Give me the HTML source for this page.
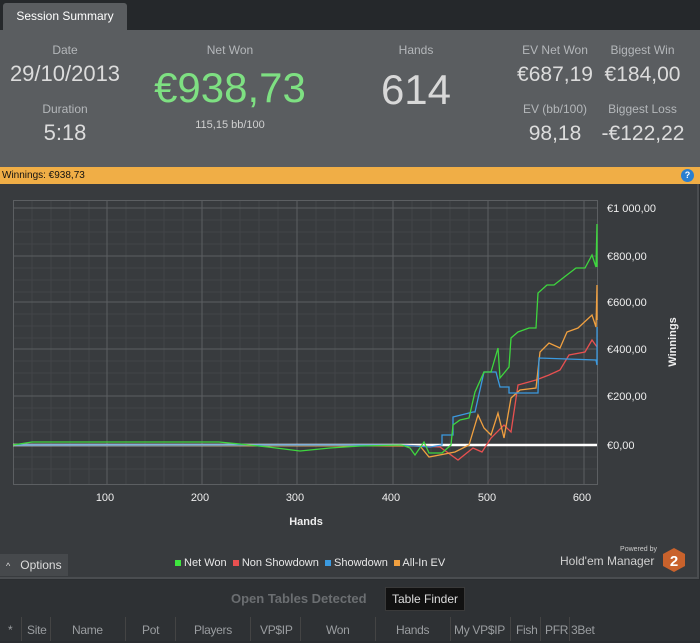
<!DOCTYPE html>
<html><head><meta charset="utf-8"><style>
body{margin:0;width:700px;height:641px;overflow:hidden;background:#2b2e31;font-family:"Liberation Sans",sans-serif;position:relative}
.a{position:absolute}
.lbl{color:#b4b7ba;font-size:12px;text-align:center}
.val{color:#dcdcdc;text-align:center}
</style></head><body>
<div class="a" style="left:0;top:0;width:700px;height:30px;background:#25282b"></div>
<div class="a" style="left:3px;top:3px;width:124px;height:28px;background:#5a5d60;border-radius:3px 3px 0 0;color:#fff;font-size:12px;line-height:26px;text-align:center">Session Summary</div>
<div class="a" style="left:0;top:30px;width:700px;height:137px;background:#5a5d60"></div>
<div class="a lbl" style="left:15px;top:43px;width:100px">Date</div>
<div class="a val" style="left:0;top:61px;width:130px;font-size:22px">29/10/2013</div>
<div class="a lbl" style="left:15px;top:102px;width:100px">Duration</div>
<div class="a val" style="left:15px;top:120px;width:100px;font-size:22px">5:18</div>
<div class="a lbl" style="left:180px;top:43px;width:100px">Net Won</div>
<div class="a" style="left:130px;top:64px;width:200px;text-align:center;color:#7ee082;font-size:42px">€938,73</div>
<div class="a lbl" style="left:170px;top:119px;width:120px;font-size:11px;color:#d0d0d0">115,15 bb/100</div>
<div class="a lbl" style="left:366px;top:43px;width:100px">Hands</div>
<div class="a val" style="left:346px;top:66px;width:140px;font-size:42px;color:#d8d8d8">614</div>
<div class="a lbl" style="left:505px;top:43px;width:100px">EV Net Won</div>
<div class="a val" style="left:505px;top:63px;width:100px;font-size:21px">€687,19</div>
<div class="a lbl" style="left:590px;top:43px;width:105px">Biggest Win</div>
<div class="a val" style="left:590px;top:63px;width:105px;font-size:21px">€184,00</div>
<div class="a lbl" style="left:505px;top:102px;width:100px">EV (bb/100)</div>
<div class="a val" style="left:505px;top:122px;width:100px;font-size:21px">98,18</div>
<div class="a lbl" style="left:590px;top:102px;width:105px">Biggest Loss</div>
<div class="a val" style="left:588px;top:122px;width:110px;font-size:21px">-€122,22</div>
<div class="a" style="left:0;top:167px;width:700px;height:17px;background:#f0ae46;font-size:10px;line-height:17px;color:#111;padding-left:2px">Winnings: €938,73</div>
<div class="a" style="left:681px;top:169px;width:13px;height:13px;border-radius:50%;background:#2b7fd0;color:#fff;font-size:9px;line-height:13px;text-align:center;font-weight:bold">?</div>
<div class="a" style="left:0;top:184px;width:697px;height:393px;background:#383b3e;border-right:2px solid #4a4d50;border-bottom:2px solid #4a4d50"></div>
<svg class="a" style="left:0;top:184px" width="700" height="370" viewBox="0 184 700 370">
<g stroke="#424548" stroke-width="1">
<path d="M13 220H597M13 232H597M13 244H597M13 268H597M13 280H597M13 292H597M13 314H597M13 326H597M13 338H597M13 361H597M13 373H597M13 384H597M13 408H597M13 420H597M13 432H597M13 457H597M13 469H597M32 200V484M51 200V484M70 200V484M89 200V484M126 200V484M145 200V484M164 200V484M183 200V484M221 200V484M240 200V484M259 200V484M278 200V484M316 200V484M335 200V484M354 200V484M373 200V484M412 200V484M431 200V484M450 200V484M469 200V484M507 200V484M526 200V484M545 200V484M564 200V484"/>
</g>
<g stroke="#5c5f62" stroke-width="1">
<path d="M13 208H597M13 256H597M13 302H597M13 349H597M13 396H597M107 200V484M202 200V484M297 200V484M393 200V484M488 200V484M584 200V484"/>
<rect x="13.5" y="200.5" width="584" height="284" fill="none"/>
</g>
<line x1="13" y1="445" x2="597" y2="445" stroke="#fff" stroke-width="2.5"/>
<g fill="none" stroke-width="1.3">
<polyline stroke="#e85050" points="13,445 400,445 440,447 458,460 473,448 482,452 491,438 504,425 511,432 518,385 536,380 549,375 560,370 569,355 585,352 592,340 597,347"/>
<polyline stroke="#f0a040" points="13,445 420,446 429,457 455,452 469,445 478,415 484,428 491,435 498,413 504,438 511,398 520,390 536,388 540,352 549,343 560,348 567,332 578,328 592,315 596,327 597,285 597,320"/>
<polyline stroke="#3b9ae0" points="13,445 400,445 430,447 442,445 442,435 453,435 453,417 473,412 475,412 484,372 496,372 500,387 509,387 509,393 538,393 539,358 596,360 597,365 597,327"/>
<polyline stroke="#3ed63e" points="13,445 32,442 219,442 240,444 268,447 300,451 330,448 360,446 402,445 410,448 415,455 424,442 429,453 442,453 451,445 453,425 460,420 469,418 475,392 484,372 491,372 498,348 500,378 509,367 511,338 518,332 529,328 536,328 538,293 547,285 554,285 563,278 576,268 585,268 592,255 596,267 597,224 597,267"/>
</g>
<g fill="#eee" font-size="11">
<text x="607" y="212">€1 000,00</text><text x="607" y="260">€800,00</text><text x="607" y="306">€600,00</text><text x="607" y="353">€400,00</text><text x="607" y="400">€200,00</text><text x="607" y="449">€0,00</text>
<g text-anchor="middle"><text x="105" y="501">100</text><text x="200" y="501">200</text><text x="295" y="501">300</text><text x="391" y="501">400</text><text x="487" y="501">500</text><text x="582" y="501">600</text></g>
<text x="306" y="525" text-anchor="middle" font-weight="bold">Hands</text>
<text transform="translate(676,342) rotate(-90)" text-anchor="middle" font-weight="bold">Winnings</text>
</g>
</svg>
<div class="a" style="left:0;top:554px;width:68px;height:22px;background:#46494c;color:#ddd;font-size:12px;line-height:22px"><span style="font-size:9px;margin:0 10px 0 6px">^</span>Options</div>
<div class="a" style="left:175px;top:556px;font-size:11px;color:#e8e8e8;white-space:nowrap;line-height:14px">
<span style="display:inline-block;width:6px;height:6px;background:#3ee63e"></span> Net Won &nbsp;<span style="display:inline-block;width:6px;height:6px;background:#e85050"></span> Non Showdown &nbsp;<span style="display:inline-block;width:6px;height:6px;background:#3b9ae0"></span> Showdown &nbsp;<span style="display:inline-block;width:6px;height:6px;background:#f0a040"></span> All-In EV</div>
<div class="a" style="left:600px;top:546px;font-size:7px;color:#ccc;width:57px;text-align:right">Powered by</div>
<div class="a" style="left:560px;top:554px;font-size:12px;color:#d0d0d0">Hold'em Manager</div>
<svg class="a" style="left:662px;top:547px" width="24" height="26"><polygon points="12,1 23,7 23,19 12,25 1,19 1,7" fill="#c9622c"/><text x="12" y="19" fill="#fff" font-size="15" font-weight="bold" text-anchor="middle" font-family="Liberation Sans">2</text></svg>
<div class="a" style="left:0;top:580px;width:700px;height:61px;background:#2e3134"></div>
<div class="a" style="left:231px;top:591px;font-size:13px;font-weight:bold;color:#6b6e71">Open Tables Detected</div>
<div class="a" style="left:385px;top:587px;width:78px;height:22px;background:#111;border:1px solid #3a3a3a;color:#ddd;font-size:12px;line-height:22px;text-align:center">Table Finder</div>
<div class="a" style="left:0;top:617px;width:700px;height:24px;font-size:12px;color:#9a9da0;line-height:26px;letter-spacing:-0.3px">
<span class="a" style="left:8px">*</span>
<span class="a" style="left:27px">Site</span>
<span class="a" style="left:72px">Name</span>
<span class="a" style="left:142px">Pot</span>
<span class="a" style="left:194px">Players</span>
<span class="a" style="left:260px">VP$IP</span>
<span class="a" style="left:326px">Won</span>
<span class="a" style="left:396px">Hands</span>
<span class="a" style="left:454px">My VP$IP</span>
<span class="a" style="left:516px">Fish</span>
<span class="a" style="left:545px">PFR</span>
<span class="a" style="left:571px">3Bet</span>
<div class="a" style="left:21px;top:0;width:1px;height:24px;background:#444"></div><div class="a" style="left:50px;top:0;width:1px;height:24px;background:#444"></div><div class="a" style="left:125px;top:0;width:1px;height:24px;background:#444"></div><div class="a" style="left:175px;top:0;width:1px;height:24px;background:#444"></div><div class="a" style="left:250px;top:0;width:1px;height:24px;background:#444"></div><div class="a" style="left:300px;top:0;width:1px;height:24px;background:#444"></div><div class="a" style="left:375px;top:0;width:1px;height:24px;background:#444"></div><div class="a" style="left:450px;top:0;width:1px;height:24px;background:#444"></div><div class="a" style="left:510px;top:0;width:1px;height:24px;background:#444"></div><div class="a" style="left:540px;top:0;width:1px;height:24px;background:#444"></div><div class="a" style="left:569px;top:0;width:1px;height:24px;background:#444"></div>
</div>
</body></html>
